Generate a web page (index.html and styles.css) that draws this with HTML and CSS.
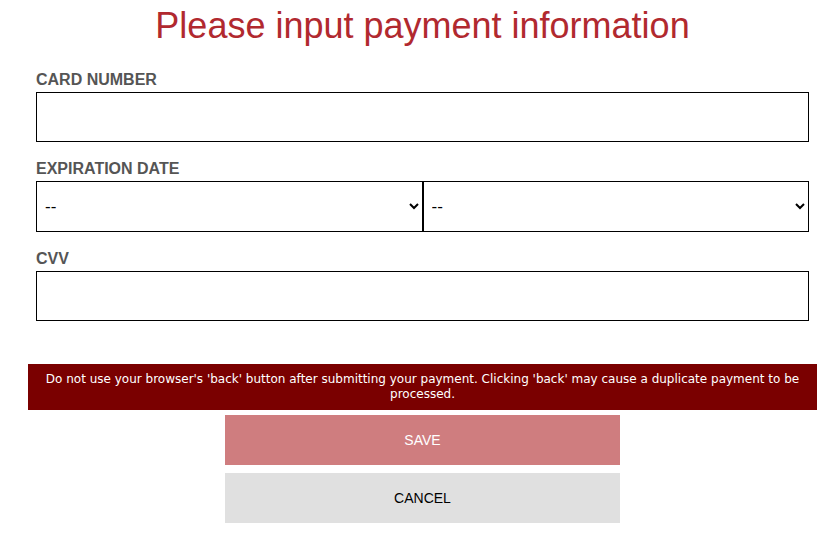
FILE: index.html
```html
<!DOCTYPE html>
<html lang="en">
<head>
    <meta charset="UTF-8">
    <meta name="viewport" content="width=device-width, initial-scale=1.0">
    <title>Payment Information</title>
    <link rel="stylesheet" href="styles.css">
</head>
<body>
    <div class="wrap">
        <h1>Please input payment information</h1>

        <div class="form">
            <div class="field">
                <label class="field-label" for="card">CARD NUMBER</label>
                <input type="text" id="card">
            </div>

            <div class="field">
                <label class="field-label" for="month">EXPIRATION DATE</label>
                <div class="expiry">
                    <select id="month">
                        <option>--</option>
                    </select>
                    <select id="year">
                        <option>--</option>
                    </select>
                </div>
            </div>

            <div class="field">
                <label class="field-label" for="cvv">CVV</label>
                <input type="text" id="cvv">
            </div>
        </div>

        <div class="warning">
            Do not use your browser's 'back' button after submitting your payment. Clicking 'back' may cause a duplicate payment to be processed.
        </div>

        <div class="actions">
            <button class="btn btn-save">SAVE</button>
            <button class="btn btn-cancel">CANCEL</button>
        </div>
    </div>
</body>
</html>
```

FILE: styles.css
```css
body {
    margin: 0;
    font-family: "Liberation Sans", Arial, sans-serif;
    background-color: #fff;
    color: #000;
}

.wrap {
    width: 789px;
    margin-left: 28px;
}

h1 {
    margin: 5px 0 0;
    font-size: 36px;
    font-weight: normal;
    line-height: 41px;
    text-align: center;
    color: #b1292f;
}

.form {
    padding: 25px 8px 0;
}

.field {
    margin-bottom: 18px;
}

.field-label {
    display: block;
    margin-bottom: 3px;
    font-size: 16px;
    font-weight: bold;
    line-height: 18px;
    color: #555;
}

input, select {
    box-sizing: border-box;
    width: 100%;
    height: 50px;
    margin: 0;
    border: 1px solid #000;
    border-radius: 0;
    background-color: #fff;
    font-family: "Liberation Sans", Arial, sans-serif;
    font-size: 17px;
    color: #000;
}

select {
    height: 51px;
    padding: 0 4px;
}

.expiry {
    display: flex;
}

.expiry select {
    flex: 1;
}

.warning {
    margin-top: 43px;
    padding: 8px 16px;
    background-color: #7a0000;
    color: #fff;
    font-family: "DejaVu Sans", Verdana, sans-serif;
    font-size: 12px;
    line-height: 15px;
    text-align: center;
}

.actions {
    display: flex;
    flex-direction: column;
    align-items: center;
    gap: 8px;
    margin-top: 5px;
}

.btn {
    width: 395px;
    height: 50px;
    border: none;
    font-family: "Liberation Sans", Arial, sans-serif;
    font-size: 14px;
    cursor: pointer;
}

.btn-save {
    background-color: #cf7d7f;
    color: #fff;
}

.btn-cancel {
    background-color: #e0e0e0;
    color: #000;
}
```
